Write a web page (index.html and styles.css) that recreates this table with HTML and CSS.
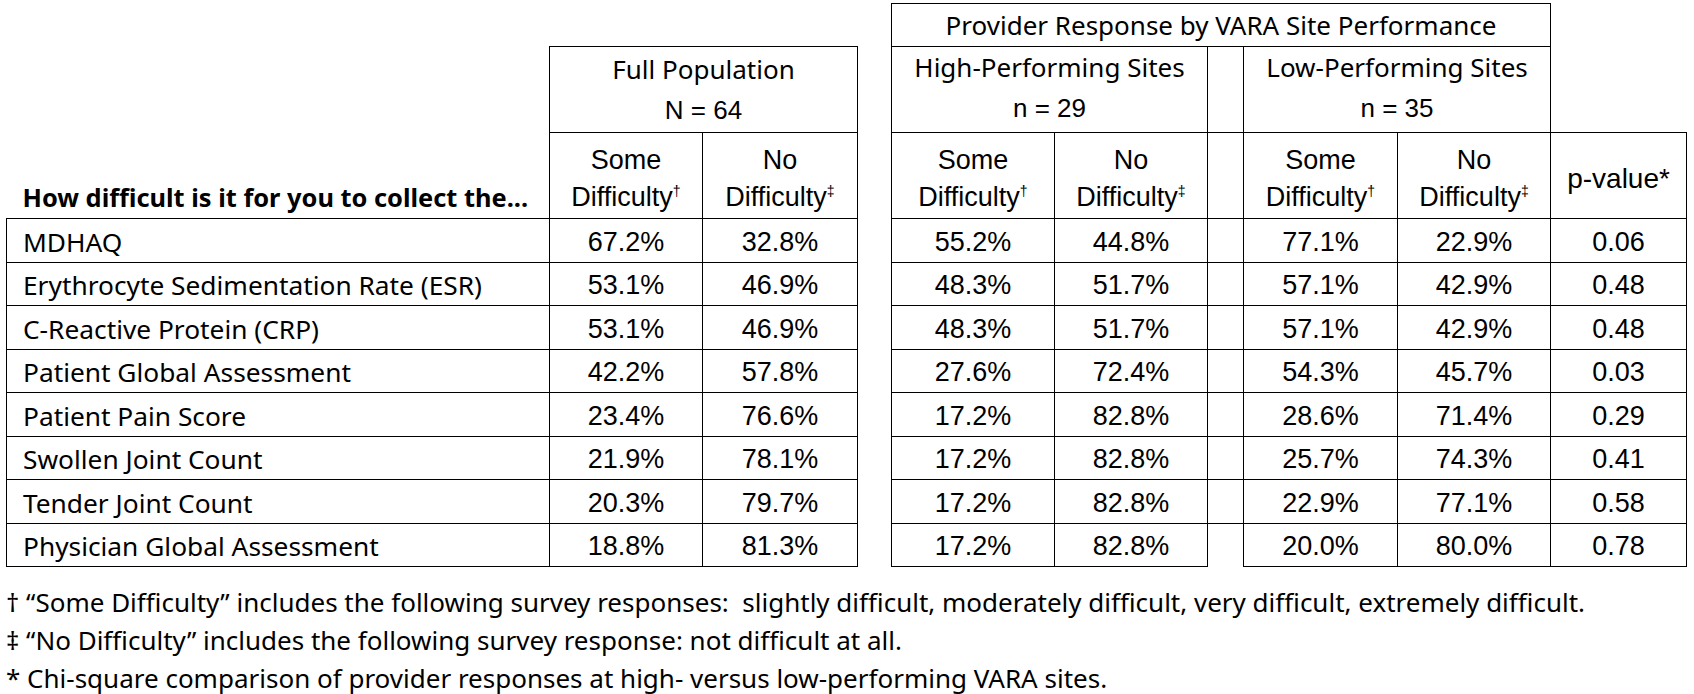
FILE: index.html
```html
<!DOCTYPE html>
<html lang="en">
<head>
<meta charset="utf-8">
<title>Difficulty collecting measures</title>
<link rel="stylesheet" href="styles.css">
</head>
<body>
<table class="t">
  <colgroup>
    <col class="c-label"><col class="c-fs"><col class="c-fn"><col class="c-gap1">
    <col class="c-hs"><col class="c-hn"><col class="c-gap2">
    <col class="c-ls"><col class="c-ln"><col class="c-p">
  </colgroup>
  <tr class="r-top">
    <td></td><td></td><td></td><td></td>
    <td class="b grp" colspan="5">Provider Response by VARA Site Performance</td>
    <td></td>
  </tr>
  <tr class="r-grp">
    <td></td>
    <td class="b grp2 fp" colspan="2">Full Population<br><span class="n">N = 64</span></td>
    <td></td>
    <td class="b grp2 site" colspan="2">High-Performing Sites<br><span class="n">n = 29</span></td>
    <td class="gapc"></td>
    <td class="b grp2 site" colspan="2">Low-Performing Sites<br><span class="n">n = 35</span></td>
    <td></td>
  </tr>
  <tr class="r-sub">
    <th class="q">How difficult is it for you to collect the...</th>
    <td class="b sub">Some<br>Difficulty<sup>†</sup></td>
    <td class="b sub">No<br>Difficulty<sup>‡</sup></td>
    <td></td>
    <td class="b sub">Some<br>Difficulty<sup>†</sup></td>
    <td class="b sub">No<br>Difficulty<sup>‡</sup></td>
    <td class="gapc"></td>
    <td class="b sub">Some<br>Difficulty<sup>†</sup></td>
    <td class="b sub">No<br>Difficulty<sup>‡</sup></td>
    <td class="b sub pv">p-value*</td>
  </tr>
  <tr class="r"><td class="b lbl">MDHAQ</td><td class="b v">67.2%</td><td class="b v">32.8%</td><td></td><td class="b v">55.2%</td><td class="b v">44.8%</td><td class="gapc"></td><td class="b v">77.1%</td><td class="b v">22.9%</td><td class="b v">0.06</td></tr>
  <tr class="r"><td class="b lbl">Erythrocyte Sedimentation Rate (ESR)</td><td class="b v">53.1%</td><td class="b v">46.9%</td><td></td><td class="b v">48.3%</td><td class="b v">51.7%</td><td class="gapc"></td><td class="b v">57.1%</td><td class="b v">42.9%</td><td class="b v">0.48</td></tr>
  <tr class="r"><td class="b lbl">C-Reactive Protein (CRP)</td><td class="b v">53.1%</td><td class="b v">46.9%</td><td></td><td class="b v">48.3%</td><td class="b v">51.7%</td><td class="gapc"></td><td class="b v">57.1%</td><td class="b v">42.9%</td><td class="b v">0.48</td></tr>
  <tr class="r"><td class="b lbl">Patient Global Assessment</td><td class="b v">42.2%</td><td class="b v">57.8%</td><td></td><td class="b v">27.6%</td><td class="b v">72.4%</td><td class="gapc"></td><td class="b v">54.3%</td><td class="b v">45.7%</td><td class="b v">0.03</td></tr>
  <tr class="r"><td class="b lbl">Patient Pain Score</td><td class="b v">23.4%</td><td class="b v">76.6%</td><td></td><td class="b v">17.2%</td><td class="b v">82.8%</td><td class="gapc"></td><td class="b v">28.6%</td><td class="b v">71.4%</td><td class="b v">0.29</td></tr>
  <tr class="r"><td class="b lbl">Swollen Joint Count</td><td class="b v">21.9%</td><td class="b v">78.1%</td><td></td><td class="b v">17.2%</td><td class="b v">82.8%</td><td class="gapc"></td><td class="b v">25.7%</td><td class="b v">74.3%</td><td class="b v">0.41</td></tr>
  <tr class="r"><td class="b lbl">Tender Joint Count</td><td class="b v">20.3%</td><td class="b v">79.7%</td><td></td><td class="b v">17.2%</td><td class="b v">82.8%</td><td class="gapc"></td><td class="b v">22.9%</td><td class="b v">77.1%</td><td class="b v">0.58</td></tr>
  <tr class="r"><td class="b lbl">Physician Global Assessment</td><td class="b v">18.8%</td><td class="b v">81.3%</td><td></td><td class="b v">17.2%</td><td class="b v">82.8%</td><td class="gapc"></td><td class="b v">20.0%</td><td class="b v">80.0%</td><td class="b v">0.78</td></tr>
</table>
<div class="notes">
  <p>† “Some Difficulty” includes the following survey responses:&nbsp; slightly difficult, moderately difficult, very difficult, extremely difficult.</p>
  <p>‡ “No Difficulty” includes the following survey response: not difficult at all.</p>
  <p>* Chi-square comparison of provider responses at high- versus low-performing VARA sites.</p>
</div>
</body>
</html>
```
FILE: styles.css
```css
html, body {
  margin: 0;
  padding: 0;
  background: #ffffff;
  color: #000000;
}
body {
  padding: 3px 0 0 6px;
  font-family: "Noto Sans", "Open Sans", sans-serif;
}
.t {
  border-collapse: collapse;
  table-layout: fixed;
  width: 1680px;
}
.c-label { width: 543px; }
.c-fs { width: 153px; }
.c-fn { width: 155px; }
.c-gap1 { width: 34px; }
.c-hs { width: 163px; }
.c-hn { width: 153px; }
.c-gap2 { width: 36px; }
.c-ls { width: 154px; }
.c-ln { width: 153px; }
.c-p { width: 136px; }
td, th {
  padding: 0;
  font-weight: normal;
}
.b {
  border: 1px solid #000;
}
.gapc {
  border-top: 1px solid #000;
}
.r-top { height: 43px; }
.r-grp { height: 86px; }
.r-sub { height: 86px; }
.r { height: 43.5px; }
.grp {
  text-align: center;
  font-size: 26px;
  line-height: 40px;
  vertical-align: middle;
}
.grp2 {
  text-align: center;
  font-size: 26px;
  line-height: 40px;
  vertical-align: middle;
}
.site {
  padding-bottom: 4px;
}
.n {
  font-family: "Liberation Sans", Arial, sans-serif;
  font-size: 26px;
}
.sub {
  text-align: center;
  font-family: "Liberation Sans", Arial, sans-serif;
  font-size: 27px;
  line-height: 37px;
  vertical-align: middle;
  padding-top: 6px;
}
.sub sup {
  font-size: 14px;
  line-height: 0;
  vertical-align: 10px;
}
.pv {
  font-size: 28px;
}
.q {
  text-align: left;
  vertical-align: bottom;
  font-weight: bold;
  font-size: 25.4px;
  line-height: 34px;
  padding: 0 0 4px 16px;
  border-bottom: 1px solid #000;
  white-space: nowrap;
}
.lbl {
  font-size: 26.3px;
  line-height: 36px;
  padding: 3px 0 0 16px;
  text-align: left;
  vertical-align: middle;
  white-space: nowrap;
}
.v {
  font-family: "Liberation Sans", Arial, sans-serif;
  font-size: 27px;
  line-height: 36px;
  text-align: center;
  vertical-align: middle;
  padding-top: 3px;
}
.notes {
  margin-top: 16px;
  font-size: 26px;
}
.notes p {
  margin: 0;
  line-height: 38px;
}
```
